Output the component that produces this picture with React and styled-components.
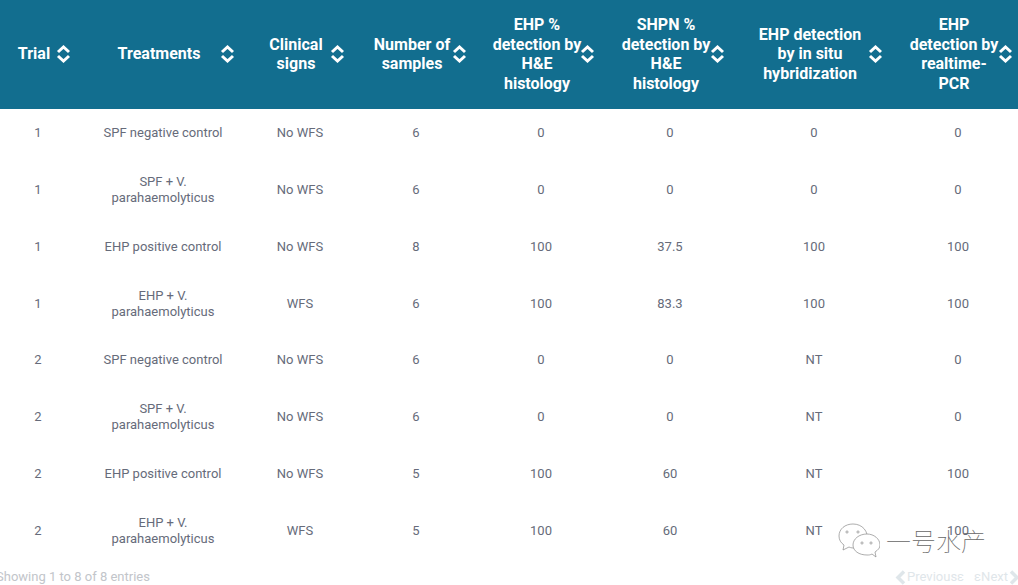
import React from "react";
import styled, { createGlobalStyle } from "styled-components";

const Global = createGlobalStyle`
  html, body { margin: 0; padding: 0; background: #fff; overflow: hidden; height: 585px; }
  body { font-family: Roboto, "Liberation Sans", sans-serif; }
`;

const Page = styled.div`
  position: relative;
  width: 1018px;
  height: 585px;
  overflow: hidden;
`;

const Table = styled.table`
  width: 1028px;
  margin-left: -5px;
  border-collapse: collapse;
  table-layout: fixed;
`;

const HeadRow = styled.tr`
  height: 109px;
  background: #126e8f;
`;

const HeadCell = styled.th`
  position: relative;
  padding: 0 23px 1px 15px;
  font-size: 16px;
  line-height: 19.5px;
  font-weight: 700;
  color: #fff;
  text-align: center;
`;

const SortIcon = styled.svg`
  position: absolute;
  right: 10px;
  top: 44.5px;
  width: 15px;
  height: 18px;
`;

const Row = styled.tr`
  height: ${(p) => p.$h}px;
`;

const Cell = styled.td`
  padding: 0 18px;
  font-size: 13px;
  line-height: 16px;
  color: #666b7a;
  text-align: center;
`;

const Footer = styled.div`
  display: flex;
  justify-content: space-between;
  align-items: center;
  margin: 5px 0 0 -4px;
  width: 1024px;
  font-size: 13px;
  line-height: 16px;
  color: #c2c5ca;
`;

const Pager = styled.div`
  display: flex;
  align-items: center;
  color: #dfe6ea;
`;

const PageLink = styled.span`
  display: inline-flex;
  align-items: center;
  margin-left: ${(p) => p.$gap || 0}px;
`;

const Chevron = styled.svg`
  width: 12px;
  height: 15px;
  flex: none;
`;

const Watermark = styled.div`
  position: absolute;
  left: 838px;
  top: 523px;
  display: flex;
  align-items: center;
  gap: 6px;
`;

const WatermarkText = styled.span`
  font-family: "Noto Sans CJK SC", sans-serif;
  font-size: 25px;
  font-weight: 100;
  line-height: 30px;
  color: #666;
  margin-top: -3px;
`;

const columns = [86, 164, 110, 122, 128, 130, 158, 130];
const headers = [
  "Trial",
  "Treatments",
  "Clinical signs",
  "Number of samples",
  "EHP % detection by H&E histology",
  "SHPN % detection by H&E histology",
  "EHP detection by in situ hybridization",
  "EHP detection by realtime-PCR",
];
const rows = [
  [48, "1", "SPF negative control", "No WFS", "6", "0", "0", "0", "0"],
  [66, "1", "SPF + V. parahaemolyticus", "No WFS", "6", "0", "0", "0", "0"],
  [48, "1", "EHP positive control", "No WFS", "8", "100", "37.5", "100", "100"],
  [65, "1", "EHP + V. parahaemolyticus", "WFS", "6", "100", "83.3", "100", "100"],
  [48, "2", "SPF negative control", "No WFS", "6", "0", "0", "NT", "0"],
  [66, "2", "SPF + V. parahaemolyticus", "No WFS", "6", "0", "0", "NT", "0"],
  [48, "2", "EHP positive control", "No WFS", "5", "100", "60", "NT", "100"],
  [66, "2", "EHP + V. parahaemolyticus", "WFS", "5", "100", "60", "NT", "100"],
];

const Sort = () => (
  <SortIcon viewBox="0 0 15 18" fill="none" stroke="#fff" strokeWidth="3">
    <path d="M2 7 L7.5 2 L13 7" />
    <path d="M2 11 L7.5 16 L13 11" />
  </SortIcon>
);

const WeChat = () => (
  <svg width="42" height="36" viewBox="0 0 42 36" fill="#fff" stroke="#8a8a8a" strokeWidth="0.7">
    <path d="M15 1 C7 1 1 6 1 13 C1 17 3 20 6 22 L5 27 L11 24 C13 25 15 25 17 25 L28 25 C29 23 30 21 29 18 C31 8 24 1 15 1 Z" />
    <path d="M29 11 C21 11 15 16 15 22 C15 28 21 32 29 32 C31 32 32 32 34 31 L38 34 L37 29 C40 27 42 25 42 22 C42 16 36 11 29 11 Z" />
    <circle cx="9" cy="9" r="1.1" />
    <circle cx="20" cy="9" r="1.1" />
    <circle cx="24" cy="20" r="1.1" />
    <circle cx="33" cy="20" r="1.1" />
  </svg>
);

export default function App() {
  return (
    <Page>
      <Global />
      <Table>
        <colgroup>
          {columns.map((w, i) => (
            <col key={i} width={w} />
          ))}
        </colgroup>
        <thead>
          <HeadRow>
            {headers.map((h) => (
              <HeadCell key={h}>
                {h}
                <Sort />
              </HeadCell>
            ))}
          </HeadRow>
        </thead>
        <tbody>
          {rows.map(([h, ...cells], i) => (
            <Row key={i} $h={h}>
              {cells.map((c, j) => (
                <Cell key={j}>{c}</Cell>
              ))}
            </Row>
          ))}
        </tbody>
      </Table>
      <Footer>
        <span>Showing 1 to 8 of 8 entries</span>
        <Pager>
          <PageLink>
            <Chevron viewBox="0 0 12 15" fill="none" stroke="currentColor" strokeWidth="3.5">
              <path d="M9 1.5 L3 7.5 L9 13.5" />
            </Chevron>
            Previousε
          </PageLink>
          <PageLink $gap={10}>
            εNext
            <Chevron viewBox="0 0 12 15" fill="none" stroke="currentColor" strokeWidth="3.5">
              <path d="M3 1.5 L9 7.5 L3 13.5" />
            </Chevron>
          </PageLink>
        </Pager>
      </Footer>
      <Watermark>
        <WeChat />
        <WatermarkText>一号水产</WatermarkText>
      </Watermark>
    </Page>
  );
}
